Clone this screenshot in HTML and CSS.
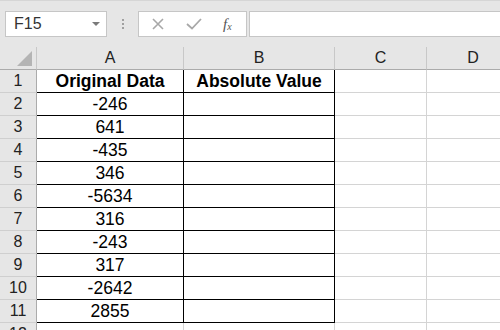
FILE: index.html
```html
<!DOCTYPE html>
<html lang="en">
<head>
  <meta charset="UTF-8">
  <title>Absolute Value</title>
  <link rel="stylesheet" href="styles.css">
</head>
<body>
  <div class="toolbar">
    <div class="namebox">
      <span>F15</span>
      <span class="caret"></span>
    </div>
    <div class="grip"><i></i><i></i><i></i></div>
    <div class="fxbox">
      <svg class="ico" width="14" height="12" viewBox="0 0 14 12">
        <path d="M2 1 L12 11 M12 1 L2 11" stroke="#a8a8a8" stroke-width="1.6" fill="none"/>
      </svg>
      <svg class="ico" width="16" height="12" viewBox="0 0 16 12">
        <path d="M1 6 L6 10.5 L15 1" stroke="#a8a8a8" stroke-width="1.8" fill="none"/>
      </svg>
      <span class="fx">f<sub>x</sub></span>
    </div>
    <div class="formula"></div>
  </div>

  <div class="grid-wrap">
    <table class="sheet">
      <colgroup>
        <col class="c-rh">
        <col class="c-a">
        <col class="c-b">
        <col class="c-c">
        <col>
      </colgroup>
      <thead>
        <tr>
          <th class="corner"><span class="tri"></span></th>
          <th>A</th>
          <th>B</th>
          <th>C</th>
          <th>D</th>
        </tr>
      </thead>
      <tbody id="rows"></tbody>
    </table>
  </div>

  <script>
    const data = ["-246", "641", "-435", "346", "-5634", "316", "-243", "317", "-2642", "2855"];
    const rows = document.getElementById("rows");

    function addRow(num, a, b, boxed, head) {
      const tr = document.createElement("tr");
      if (head) tr.classList.add("head");
      tr.innerHTML = `
        <th>${num}</th>
        <td class="${boxed ? "box" : ""}">${a}</td>
        <td class="${boxed ? "box" : ""}">${b}</td>
        <td></td>
        <td></td>
      `;
      rows.appendChild(tr);
    }

    addRow(1, "Original Data", "Absolute Value", true, true);
    data.forEach((v, i) => addRow(i + 2, v, "", true, false));
    addRow(12, "", "", false, false);
  </script>
</body>
</html>
```

FILE: styles.css
```css
body {
  margin: 0;
  font-family: "Liberation Sans", Arial, sans-serif;
  background-color: #fff;
  overflow: hidden;
}

.toolbar {
  height: 47px;
  box-sizing: border-box;
  background-color: #e6e6e6;
  border-top: 1px solid #d6d6d6;
  padding: 10px 0 0 5px;
  display: flex;
  align-items: flex-start;
}

.namebox {
  width: 86px;
  height: 24px;
  background-color: #fff;
  border: 1px solid #c6c6c6;
  display: flex;
  align-items: center;
  justify-content: space-between;
  padding: 0 6px 0 8px;
  font-size: 16px;
  color: #333;
}

.caret {
  width: 0;
  height: 0;
  border-left: 4px solid transparent;
  border-right: 4px solid transparent;
  border-top: 4px solid #7a7a7a;
}

.grip {
  width: 31px;
  height: 26px;
  display: flex;
  flex-direction: column;
  align-items: center;
  justify-content: center;
  gap: 2px;
}

.grip i {
  width: 2px;
  height: 2px;
  background-color: #a0a0a0;
}

.fxbox {
  width: 95px;
  height: 24px;
  background-color: #fff;
  border: 1px solid #c6c6c6;
  display: flex;
  align-items: center;
  padding-left: 12px;
}

.ico {
  margin-right: 21px;
}

.fx {
  font-family: "Liberation Serif", serif;
  font-style: italic;
  font-size: 15px;
  color: #555;
  line-height: 1;
}

.fx sub {
  font-size: 10px;
  vertical-align: -1px;
}

.formula {
  flex: 1;
  height: 24px;
  margin-left: 2px;
  background-color: #fff;
  border: 1px solid #c6c6c6;
  border-right: none;
}

.grid-wrap {
  width: 500px;
  overflow: hidden;
}

.sheet {
  table-layout: fixed;
  border-collapse: separate;
  border-spacing: 0;
  width: 520px;
  font-size: 17.5px;
}

.c-rh { width: 37px; }
.c-a { width: 147px; }
.c-b { width: 151px; }
.c-c { width: 92px; }

.sheet th,
.sheet td {
  height: 22px;
  padding: 0;
  line-height: 22px;
  text-align: center;
  white-space: nowrap;
  overflow: hidden;
  border-right: 1px solid #d4d4d4;
  border-bottom: 1px solid #d4d4d4;
}

.sheet th {
  font-size: 16px;
}

.sheet thead th {
  background-color: #e6e6e6;
  font-weight: normal;
  color: #222;
  border-right-color: #c8c8c8;
  border-bottom-color: #ababab;
}

.sheet tbody th {
  background-color: #e6e6e6;
  font-weight: normal;
  color: #222;
  border-right-color: #ababab;
  border-bottom-color: #cfcfcf;
}

.sheet td {
  color: #000;
}

.sheet td.box {
  border-right-color: #000;
  border-bottom-color: #000;
}

.head td {
  font-weight: bold;
}

.corner {
  position: relative;
}

.tri {
  position: absolute;
  right: 4px;
  bottom: 3px;
  width: 0;
  height: 0;
  border-left: 15px solid transparent;
  border-bottom: 15px solid #b4b4b4;
}
```
